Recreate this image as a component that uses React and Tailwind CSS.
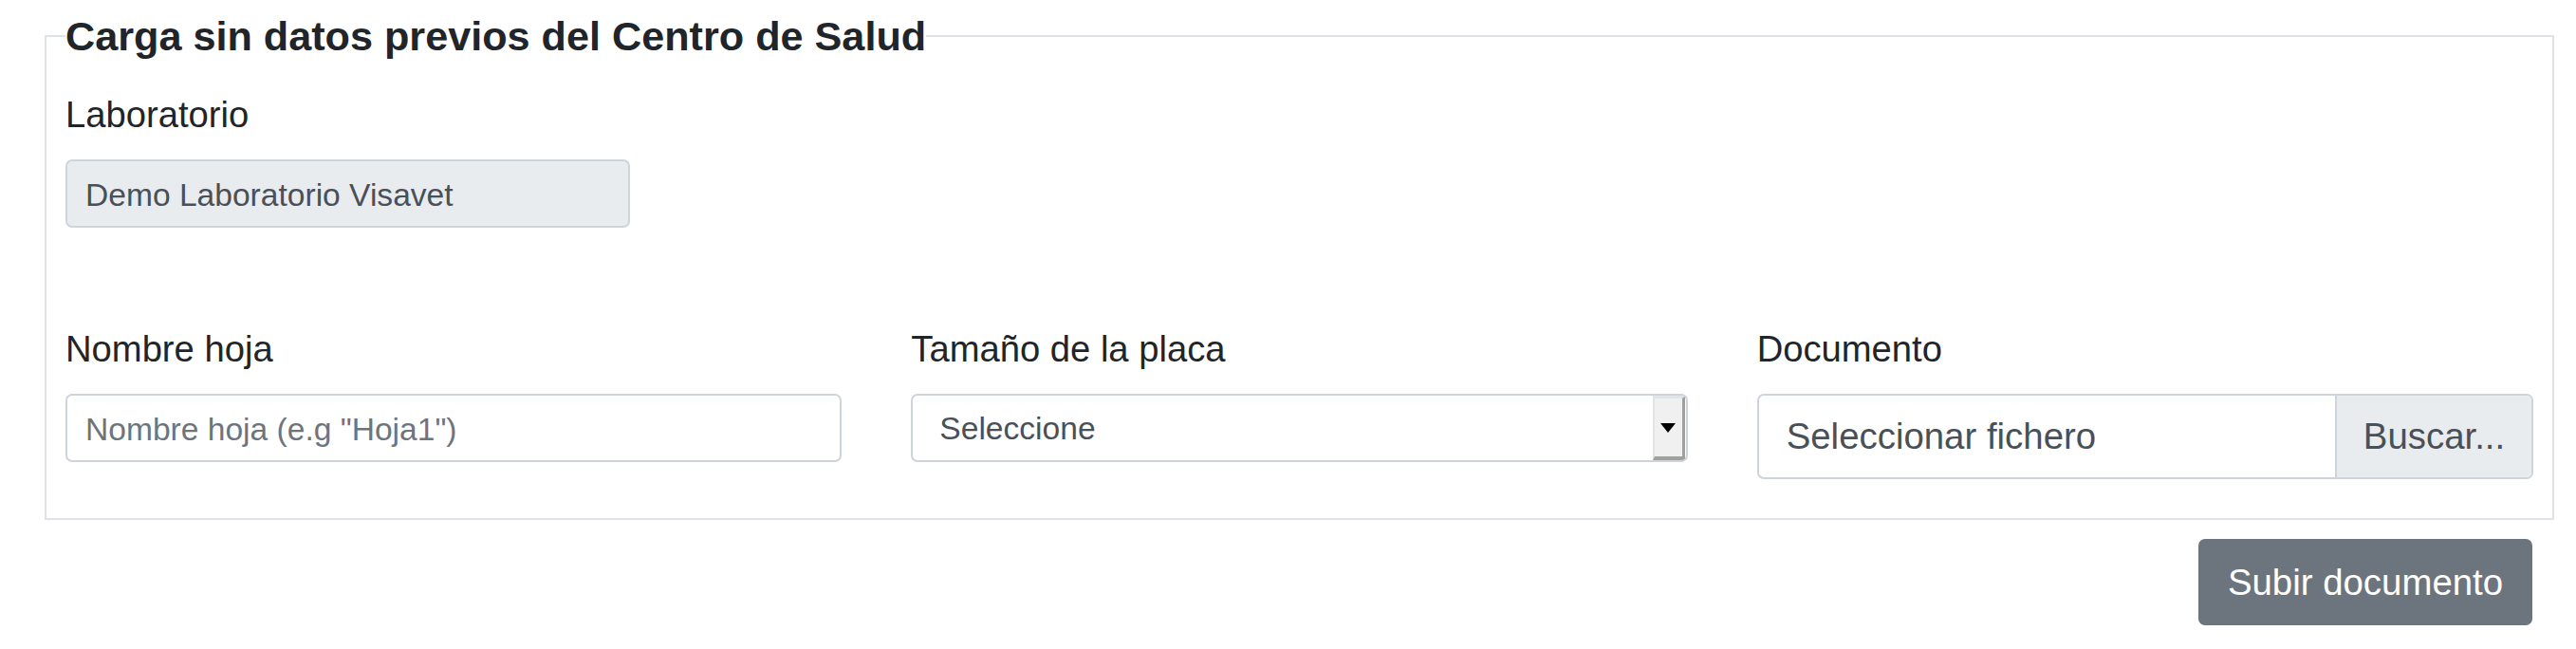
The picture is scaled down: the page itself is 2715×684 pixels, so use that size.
import { useState } from 'react';

// Carga de documento sin datos previos del centro de salud
export default function App() {
  const [sheetName, setSheetName] = useState('');

  return (
    <div className="w-[2715px] bg-white pt-[12px] font-['Liberation_Sans',Arial,sans-serif] text-[#212529]">
      <fieldset className="ml-[47px] w-[2645px] border-2 border-[#dee2e6] px-[20px] pt-[27px] pb-[41px]">
        <legend className="p-0 text-[43.2px] font-bold leading-[52px] text-[#212529]">
          Carga sin datos previos del Centro de Salud
        </legend>

        {/* Laboratorio */}
        <div className="flex flex-col">
          <label className="mb-[19px] pt-[1px] text-[38.2px] leading-[57px]">Laboratorio</label>
          <input
            type="text"
            readOnly
            value="Demo Laboratorio Visavet"
            className="h-[72px] w-[595px] rounded-[7px] border-2 border-[#ced4da] bg-[#e9ecef] px-[19px] pt-[3px] text-[33.6px] text-[#495057] outline-none"
          />
        </div>

        <div className="mt-[98px] grid grid-cols-3 items-start gap-x-[73px]">
          {/* Nombre hoja */}
          <div className="flex flex-col">
            <label className="mb-[19px] pt-[1px] text-[38.2px] leading-[57px]">Nombre hoja</label>
            <input
              type="text"
              value={sheetName}
              onChange={(e) => setSheetName(e.target.value)}
              placeholder='Nombre hoja (e.g "Hoja1")'
              className="h-[72px] w-full rounded-[7px] border-2 border-[#ced4da] bg-white px-[19px] pt-[3px] text-[33.6px] text-[#495057] outline-none placeholder:text-[#6c757d]"
            />
          </div>

          {/* Tamaño de la placa */}
          <div className="flex flex-col">
            <label className="mb-[19px] pt-[1px] text-[38.2px] leading-[57px]">Tamaño de la placa</label>
            <div className="flex h-[72px] w-full overflow-hidden rounded-[7px] border-2 border-[#ced4da] bg-white">
              <div className="flex flex-1 items-center pl-[28px] pt-[3px] text-[33.6px] text-[#495057]">Seleccione</div>
              <div className="mr-[1px] flex w-[34px] items-center justify-center border-t-[3px] border-l-2 border-r-[3px] border-b-[4px] border-t-[#e3e3e3] border-l-[#e3e3e3] border-r-[#a0a0a0] border-b-[#a0a0a0] bg-[#f0f0f0]">
                <div className="h-0 w-0 border-x-[8px] border-t-[10px] border-x-transparent border-t-black" />
              </div>
            </div>
          </div>

          {/* Documento */}
          <div className="flex flex-col">
            <label className="mb-[19px] pt-[1px] text-[38.2px] leading-[57px]">Documento</label>
            <div className="flex h-[90px] w-full overflow-hidden rounded-[7px] border-2 border-[#ced4da] bg-white text-[38.4px] text-[#495057]">
              <div className="flex flex-1 items-center pl-[29px]">Seleccionar fichero</div>
              <div className="flex w-[207px] items-center justify-center border-l-2 border-[#ced4da] bg-[#e9ecef]">
                Buscar...
              </div>
            </div>
          </div>
        </div>
      </fieldset>

      <div className="mt-[20px] flex w-[2669px] justify-end pb-[25px]">
        <button
          type="button"
          className="flex h-[91px] w-[352px] items-center justify-center rounded-[7px] bg-[#6c757d] text-[38.4px] text-white"
        >
          Subir documento
        </button>
      </div>
    </div>
  );
}
